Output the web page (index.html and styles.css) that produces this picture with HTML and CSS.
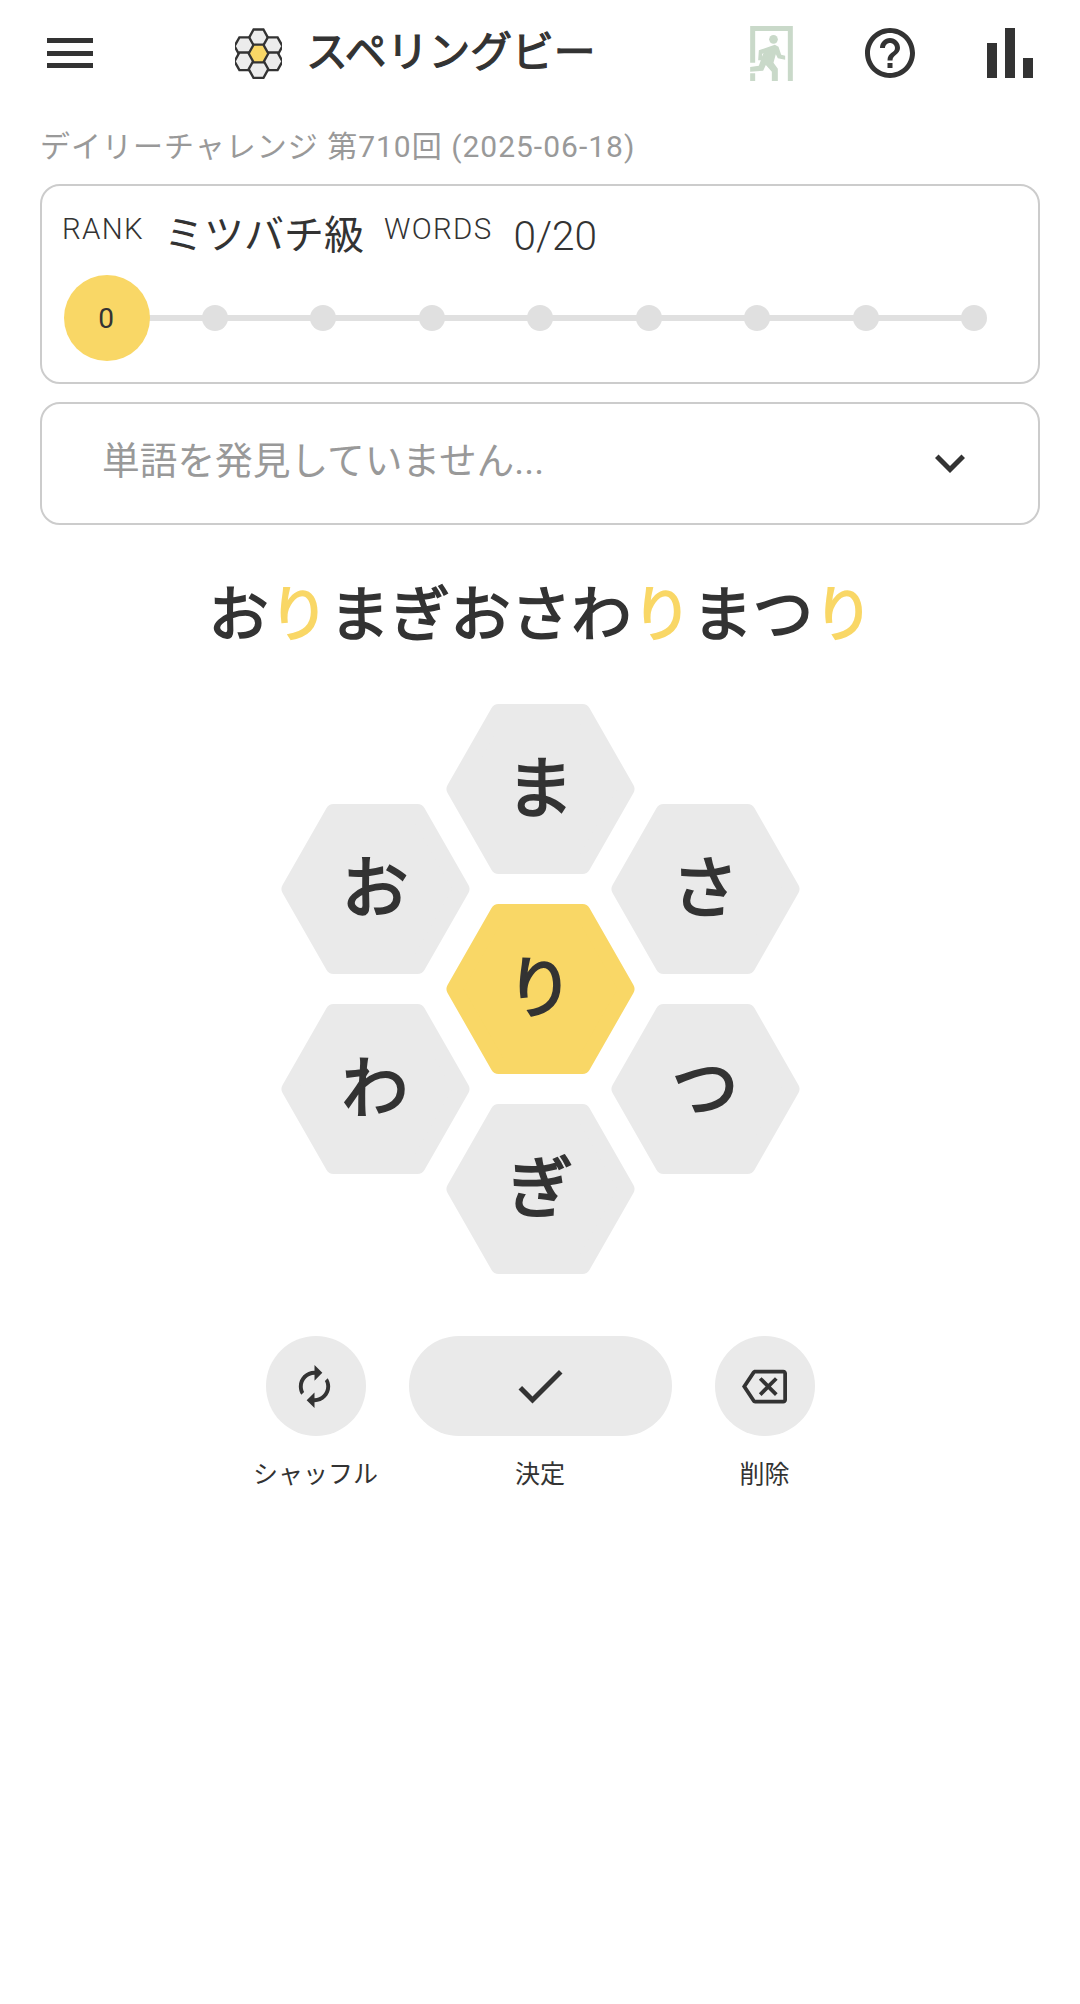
FILE: index.html
```html
<!DOCTYPE html>
<html lang="ja">
<head>
<meta charset="utf-8">
<title>スペリングビー</title>
<link rel="stylesheet" href="styles.css">
</head>
<body>
<svg class="defs" width="0" height="0" aria-hidden="true">
  <defs>
    <polygon id="hexshape" points="8.5,85 52.5,8 136.5,8 180.5,85 136.5,162 52.5,162"/>
    <polygon id="minihex" points="-10,0 -5,-9 5,-9 10,0 5,9 -5,9"/>
  </defs>
</svg>
<header class="topbar">
  <button class="menu" aria-label="menu"><span></span><span></span><span></span></button>
  <div class="brand">
    <svg class="logo" viewBox="0 0 48 52">
      <g class="logo-cells">
        <use href="#minihex" x="24" y="10.5"/>
        <use href="#minihex" x="9.5" y="18.5"/>
        <use href="#minihex" x="38.5" y="18.5"/>
        <use href="#minihex" x="9.5" y="34"/>
        <use href="#minihex" x="38.5" y="34"/>
        <use href="#minihex" x="24" y="42"/>
        <use class="logo-center" href="#minihex" x="24" y="26"/>
      </g>
    </svg>
    <h1 class="title">スペリングビー</h1>
  </div>
  <svg class="ic-exit" viewBox="150 80 128 165">
    <path d="M150 80H278V245H263V95H165V190H150ZM150 222H165V245H150Z"/>
    <circle cx="220" cy="120" r="13"/>
    <path d="M176 153L224 136L235 142L243 166L255 169V181L233 177L227 165L220 190L233 208V245H215V217L197 197L189 214L150 217V203L176 199L190 161L186 164V183H174Z"/>
  </svg>
  <svg class="ic-help" viewBox="0 0 24 24"><path d="M11 18h2v-2h-2v2zm1-16C6.48 2 2 6.48 2 12s4.48 10 10 10 10-4.48 10-10S17.52 2 12 2zm0 18c-4.41 0-8-3.59-8-8s3.59-8 8-8 8 3.59 8 8-3.590 8-8 8zm0-14c-2.210 0-4 1.790-4 4h2c0-1.100.9-2 2-2s2 .9 2 2c0 2-3 1.750-3 5h2c0-2.250 3-2.500 3-5 0-2.210-1.790-4-4-4z"/></svg>
  <div class="bars"><i class="b1"></i><i class="b2"></i><i class="b3"></i></div>
</header>

<p class="daily">デイリーチャレンジ 第710回 (2025-06-18)</p>

<section class="card rank-card">
  <div class="rank-row">
    <span class="lab">RANK</span>
    <span class="val">ミツバチ級</span>
    <span class="lab">WORDS</span>
    <span class="val num">0/20</span>
  </div>
  <div class="track">
    <span class="node">0</span>
    <i class="dot"></i><i class="dot"></i><i class="dot"></i><i class="dot"></i>
    <i class="dot"></i><i class="dot"></i><i class="dot"></i><i class="dot"></i>
  </div>
</section>

<section class="card found">
  <span class="found-text">単語を発見していません...</span>
  <svg class="chev" viewBox="0 0 24 24"><path d="M16.590 8.590L12 13.170 7.410 8.590 6 10l6 6 6-6z"/></svg>
</section>

<p class="word">お<b>り</b>まぎおさわ<b>り</b>まつ<b>り</b></p>

<div class="hive">
  <div class="cell c-top"><svg viewBox="0 0 189 170"><use href="#hexshape"/></svg><span>ま</span></div>
  <div class="cell c-ul"><svg viewBox="0 0 189 170"><use href="#hexshape"/></svg><span>お</span></div>
  <div class="cell c-ur"><svg viewBox="0 0 189 170"><use href="#hexshape"/></svg><span>さ</span></div>
  <div class="cell c-mid center"><svg viewBox="0 0 189 170"><use href="#hexshape"/></svg><span>り</span></div>
  <div class="cell c-ll"><svg viewBox="0 0 189 170"><use href="#hexshape"/></svg><span>わ</span></div>
  <div class="cell c-lr"><svg viewBox="0 0 189 170"><use href="#hexshape"/></svg><span>つ</span></div>
  <div class="cell c-bot"><svg viewBox="0 0 189 170"><use href="#hexshape"/></svg><span>ぎ</span></div>
</div>

<div class="actions">
  <div class="action">
    <div class="btn round"><svg class="ic-sync" viewBox="0 0 24 24"><path d="M12 4V1L8 5l4 4V6c3.310 0 6 2.690 6 6 0 1.010-.25 1.970-.7 2.800l1.460 1.460C19.540 15.030 20 13.570 20 12c0-4.420-3.580-8-8-8zm0 14c-3.310 0-6-2.690-6-6 0-1.010.25-1.970.7-2.800L5.240 7.740C4.460 8.970 4 10.430 4 12c0 4.420 3.580 8 8 8v3l4-4-4-4v3z"/></svg></div>
    <span class="cap">シャッフル</span>
  </div>
  <div class="action">
    <div class="btn pill"><svg class="ic-check" viewBox="0 0 24 24"><path d="M9 16.170L4.830 12l-1.420 1.410L9 19 21 7l-1.410-1.410z"/></svg></div>
    <span class="cap">決定</span>
  </div>
  <div class="action">
    <div class="btn round"><svg class="ic-back" viewBox="0 0 24 24"><path d="M22 3H7c-.69 0-1.230.35-1.590.88L0 12l5.410 8.110c.36.53.9.89 1.590.89h15c1.100 0 2-.9 2-2V5c0-1.100-.9-2-2-2zm0 16H7.070L2.400 12l4.660-7H22v14zm-11.590-2L14 13.410 17.590 17 19 15.590 15.410 12 19 8.410 17.590 7 14 10.590 10.410 7 9 8.410 12.590 12 9 15.590z"/></svg></div>
    <span class="cap">削除</span>
  </div>
</div>
</body>
</html>
```
FILE: styles.css
```css
* { box-sizing: border-box; }
html, body { margin: 0; padding: 0; background: #fff; }
body {
  width: 1080px;
  height: 2004px;
  overflow: hidden;
  color: #333;
  font-family: Roboto, "Noto Sans CJK JP", sans-serif;
}
.defs { position: absolute; }

.topbar {
  display: flex;
  align-items: center;
  height: 104px;
  padding: 2px 47px 0;
}
.menu {
  display: flex;
  flex-direction: column;
  justify-content: space-between;
  width: 46px;
  height: 30px;
  padding: 0;
  border: 0;
  background: none;
}
.menu span { display: block; height: 5px; background: #333; }
.brand {
  display: flex;
  align-items: center;
  margin-left: 142px;
}
.logo { width: 47px; height: 51px; flex: none; }
.logo-cells use { fill: #ececec; stroke: #333; stroke-width: 2.4; }
.logo-cells .logo-center { fill: #f9d766; }
.title {
  margin: 0 0 0 24px;
  font-size: 41.800px;
  font-weight: 400;
  -webkit-text-stroke: 1.200px #333;
  line-height: 1;
  white-space: nowrap;
}
.ic-exit { width: 43px; height: 55px; fill: #c9d9c9; flex: none; margin-left: auto; }
.ic-help { width: 60px; height: 60px; fill: #333; flex: none; margin-left: 67px; }
.bars {
  display: flex;
  align-items: flex-end;
  gap: 7.500px;
  width: 46px;
  height: 50px;
  margin-left: 67px;
}
.bars i { display: block; flex: 1; background: #333; }
.b1 { height: 35px; }
.b2 { height: 50px; }
.b3 { height: 20px; }

.daily {
  margin: 23px 0 0 40px;
  font-size: 30px;
  line-height: 40px;
  letter-spacing: 1px;
  color: #999;
}
.card {
  margin: 17px 40px 0;
  border: 2px solid #ccc;
  border-radius: 20px;
  background: #fff;
}
.rank-card { height: 199.500px; padding: 25px 20px 0 20px; }
.rank-row {
  display: flex;
  align-items: flex-start;
  gap: 20px;
  height: 49px;
}
.lab { font-size: 29.500px; letter-spacing: 1.300px; line-height: 36px; font-weight: 300; }
.val { font-size: 40px; line-height: 44px; margin-top: 3px; }
.num { font-weight: 300; font-size: 40.500px; margin-left: 1px; }
.track {
  position: relative;
  display: flex;
  align-items: center;
  justify-content: space-between;
  width: 923px;
  height: 86px;
  margin: 15px 0 0 2px;
}
.track::before {
  content: "";
  position: absolute;
  left: 20px;
  right: 13px;
  top: 40px;
  height: 6px;
  background: #e0e0e0;
}
.node {
  position: relative;
  display: flex;
  align-items: center;
  justify-content: center;
  width: 86px;
  height: 86px;
  margin-right: -30.400px;
  padding-right: 2px;
  border-radius: 50%;
  background: #f9d766;
  font-size: 28px;
}
.dot {
  position: relative;
  display: block;
  width: 26px;
  height: 26px;
  border-radius: 50%;
  background: #e0e0e0;
}

.found {
  display: flex;
  align-items: center;
  justify-content: space-between;
  height: 123.500px;
  margin-top: 18px;
  padding: 0 60px 0 60px;
}
.found-text { font-size: 37.700px; color: #999; position: relative; top: -6px; }
.chev { width: 60px; height: 60px; fill: #333; margin-right: -2px; }

.word {
  margin: 57px 1px 0 3px;
  text-align: center;
  font-size: 60.500px;
  font-weight: 400;
  -webkit-text-stroke: 1.700px;
  line-height: 68px;
  white-space: nowrap;
}
.word b { font-weight: 400; color: #f9d766; }

.hive {
  position: relative;
  width: 519px;
  height: 570px;
  margin: 54px auto 0;
}
.cell {
  position: absolute;
  width: 189px;
  height: 170px;
  display: flex;
  align-items: center;
  justify-content: center;
}
.cell svg {
  position: absolute;
  inset: 0;
  width: 100%;
  height: 100%;
  fill: #eaeaea;
  stroke: #eaeaea;
  stroke-width: 16;
  stroke-linejoin: round;
}
.cell span { position: relative; font-size: 67px; font-weight: 400; -webkit-text-stroke: 2px #333; line-height: 1; }
.center svg { fill: #f9d766; stroke: #f9d766; }
.c-top { left: 165px; top: 0; }
.c-ul { left: 0; top: 100px; }
.c-ur { left: 330px; top: 100px; }
.c-mid { left: 165px; top: 200px; }
.c-ll { left: 0; top: 300px; }
.c-lr { left: 330px; top: 300px; }
.c-bot { left: 165px; top: 400px; }

.actions {
  display: flex;
  justify-content: center;
  gap: 43px;
  margin-top: 62px;
}
.action { display: flex; flex-direction: column; align-items: center; }
.btn {
  display: flex;
  align-items: center;
  justify-content: center;
  height: 100px;
  border-radius: 50px;
  background: #eaeaea;
}
.round { width: 100px; }
.pill { width: 263px; }
.btn svg { fill: #333; }
.ic-sync { width: 47px; height: 47px; transform: scaleX(-1) translateX(1px); }
.ic-check { width: 60px; height: 60px; }
.ic-back { width: 45px; height: 45px; }
.cap {
  width: 100px;
  margin-top: 23px;
  display: flex;
  justify-content: center;
  font-size: 25px;
  line-height: 32px;
  white-space: nowrap;
}
```
